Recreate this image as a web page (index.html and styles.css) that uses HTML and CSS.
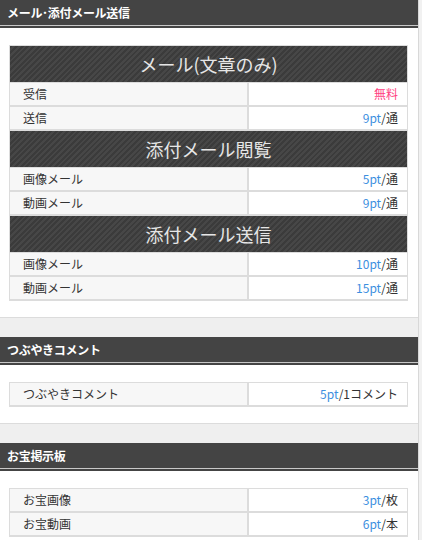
FILE: index.html
```html
<!DOCTYPE html>
<html lang="ja">
<head>
<meta charset="utf-8">
<link rel="stylesheet" href="styles.css">
</head>
<body>
<div class="page">
  <section class="sec">
    <div class="head-wrap"><h2 class="head">メール･添付メール送信</h2></div>
    <div class="body">
      <div class="tbl">
        <div class="th">メール(文章のみ)</div>
        <div class="row"><div class="l">受信</div><div class="r"><span class="free">無料</span></div></div>
        <div class="row"><div class="l">送信</div><div class="r"><span class="pt">9pt</span>/通</div></div>
        <div class="th">添付メール閲覧</div>
        <div class="row"><div class="l">画像メール</div><div class="r"><span class="pt">5pt</span>/通</div></div>
        <div class="row"><div class="l">動画メール</div><div class="r"><span class="pt">9pt</span>/通</div></div>
        <div class="th">添付メール送信</div>
        <div class="row"><div class="l">画像メール</div><div class="r"><span class="pt">10pt</span>/通</div></div>
        <div class="row"><div class="l">動画メール</div><div class="r"><span class="pt">15pt</span>/通</div></div>
      </div>
    </div>
  </section>
  <div class="gap"></div>
  <section class="sec">
    <div class="head-wrap"><h2 class="head">つぶやきコメント</h2></div>
    <div class="body">
      <div class="tbl">
        <div class="row"><div class="l">つぶやきコメント</div><div class="r"><span class="pt">5pt</span>/1コメント</div></div>
      </div>
    </div>
  </section>
  <div class="gap"></div>
  <section class="sec">
    <div class="head-wrap"><h2 class="head">お宝掲示板</h2></div>
    <div class="body">
      <div class="tbl">
        <div class="row"><div class="l">お宝画像</div><div class="r"><span class="pt">3pt</span>/枚</div></div>
        <div class="row"><div class="l">お宝動画</div><div class="r"><span class="pt">6pt</span>/本</div></div>
      </div>
    </div>
  </section>
</div>
</body>
</html>
```
FILE: styles.css
```css
html, body {
  margin: 0;
  padding: 0;
}
body {
  background: #f1f1f1;
  font-family: "Noto Sans CJK JP", "Noto Sans", sans-serif;
  font-size: 12px;
  color: #333;
}
.page {
  width: 418px;
  border-right: 1px solid #d8d8d8;
  background: #fff;
}
.head-wrap {
  border-bottom: 2px solid #444;
}
.head {
  margin: 0;
  height: 25px;
  line-height: 25px;
  background: #444;
  color: #fff;
  font-size: 12px;
  font-weight: bold;
  padding-left: 7px;
  border-bottom: 1px solid #c8c8c8;
  letter-spacing: -0.3px;
}
.body {
  padding: 17px 10px 16px 9px;
  background: #fff;
}
.gap {
  height: 19px;
  border-top: 1px solid #dcdcdc;
  background: #efefef;
}
.tbl {
  border: 1px solid #dcdcdc;
  background: #fff;
}
.th {
  height: 36px;
  line-height: 36px;
  text-align: center;
  color: #e6e6e6;
  font-size: 18px;
  background: repeating-linear-gradient(135deg, #3b3b3b 0 2px, #474747 2px 4px);
  border-bottom: 1px solid #dcdcdc;
}
.row {
  display: flex;
  height: 22px;
  line-height: 22px;
  border-bottom: 2px solid #dcdcdc;
}
.row:last-child {
  border-bottom: 1px solid #dcdcdc;
}
.l {
  width: 224px;
  flex: none;
  padding-left: 13px;
  background: #f7f7f7;
  border-right: 2px solid #dcdcdc;
}
.r {
  flex: 1;
  text-align: right;
  padding-right: 9px;
  background: #fff;
}
.pt {
  color: #3d8fe0;
}
.free {
  color: #ff3d7f;
}
```
